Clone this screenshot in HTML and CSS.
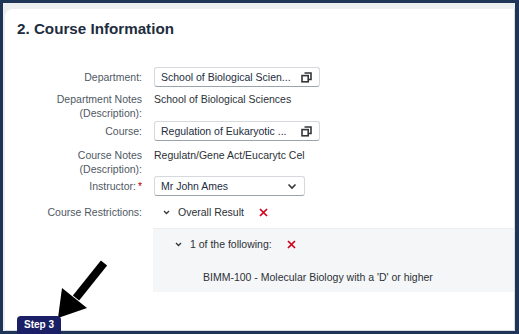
FILE: index.html
```html
<!doctype html>
<html lang="en">
<head>
    <meta charset="UTF-8">
    <title>Course Information</title>
    <link rel="stylesheet" href="styles.css">
</head>
<body>
<div class="frame">
    <div class="card">
        <h2 class="title">2. Course Information</h2>
        <div class="form">
            <div class="row row-input">
                <label class="lbl">Department:</label>
                <div class="field">
                    <span class="field-text">School of Biological Scien...</span>
                    <svg class="icon" width="11" height="11" viewBox="0 0 11 11">
                        <path d="M3.5 1h6.5v6.5h-2.2" fill="none" stroke="#32363a" stroke-width="1.6"/>
                        <rect x="1" y="3.6" width="6.2" height="6.2" fill="none" stroke="#32363a" stroke-width="1.6"/>
                    </svg>
                </div>
            </div>
            <div class="row row-text">
                <label class="lbl">Department Notes<br>(Description):</label>
                <div class="val">School of Biological Sciences</div>
            </div>
            <div class="row row-input">
                <label class="lbl">Course:</label>
                <div class="field">
                    <span class="field-text">Regulation of Eukaryotic ...</span>
                    <svg class="icon" width="11" height="11" viewBox="0 0 11 11">
                        <path d="M3.5 1h6.5v6.5h-2.2" fill="none" stroke="#32363a" stroke-width="1.6"/>
                        <rect x="1" y="3.6" width="6.2" height="6.2" fill="none" stroke="#32363a" stroke-width="1.6"/>
                    </svg>
                </div>
            </div>
            <div class="row row-text">
                <label class="lbl">Course Notes<br>(Description):</label>
                <div class="val">Regulatn/Gene Act/Eucarytc Cel</div>
            </div>
            <div class="row row-input row-last">
                <label class="lbl">Instructor:<span class="req">*</span></label>
                <div class="field field-select">
                    <span class="field-text">Mr John Ames</span>
                    <svg class="icon" width="10" height="7" viewBox="0 0 10 7">
                        <path d="M1.5 1.5l3.5 3.5l3.5-3.5" fill="none" stroke="#32363a" stroke-width="1.6"/>
                    </svg>
                </div>
            </div>
            <div class="row row-restr">
                <label class="lbl">Course Restrictions:</label>
                <div class="node">
                    <svg class="chev" width="7" height="5" viewBox="0 0 7 5">
                        <path d="M1 1l2.5 2.5l2.5-2.5" fill="none" stroke="#32363a" stroke-width="1.3"/>
                    </svg>
                    <span>Overall Result</span>
                    <svg class="del" width="9" height="9" viewBox="0 0 9 9">
                        <path d="M1 1l7 7M8 1l-7 7" stroke="#d0021b" stroke-width="1.7"/>
                    </svg>
                </div>
            </div>
        </div>
        <div class="panel">
            <div class="node">
                <svg class="chev" width="7" height="5" viewBox="0 0 7 5">
                    <path d="M1 1l2.5 2.5l2.5-2.5" fill="none" stroke="#32363a" stroke-width="1.3"/>
                </svg>
                <span>1 of the following:</span>
                <svg class="del" width="9" height="9" viewBox="0 0 9 9">
                    <path d="M1 1l7 7M8 1l-7 7" stroke="#d0021b" stroke-width="1.7"/>
                </svg>
            </div>
            <div class="leaf">BIMM-100 - Molecular Biology with a 'D' or higher</div>
        </div>
    </div>
    <svg class="arrow" width="60" height="64" viewBox="0 0 60 64">
        <line x1="48" y1="5" x2="20" y2="40" stroke="#000" stroke-width="8"/>
        <polygon points="2,60 6,30 31,50" fill="#000"/>
    </svg>
    <span class="step">Step 3</span>
</div>
</body>
</html>
```

FILE: styles.css
```css
html, body {
    margin: 0;
    padding: 0;
}

body {
    width: 519px;
    height: 334px;
    overflow: hidden;
    font-family: "Liberation Sans", Arial, sans-serif;
}

.frame {
    position: relative;
    box-sizing: border-box;
    width: 519px;
    height: 334px;
    border: solid #1f3558;
    border-width: 3px 4px 3px 3px;
    background-color: #eceef0;
    padding: 6px 0 0 2px;
}

.card {
    height: 100%;
    background-color: #fff;
    border-radius: 8px 0 0 0;
    border-right: 1px solid #d9dcdf;
    border-bottom: 1px solid #d9dcdf;
    box-sizing: border-box;
    padding: 10px 0 0 0;
}

.title {
    margin: 0 0 0 12px;
    font-size: 15.2px;
    font-weight: 700;
    color: #1d2d3e;
    line-height: 20px;
}

.form {
    margin-top: 28px;
}

.row {
    display: grid;
    grid-template-columns: 137px 1fr;
    column-gap: 12px;
    align-items: center;
    font-size: 10.5px;
    color: #2c3137;
}

.lbl {
    text-align: right;
    color: #4f5964;
    line-height: 14px;
}

.req {
    color: #bb0000;
    margin-left: 2px;
}

.row-input {
    height: 20px;
}

.row-text {
    align-items: start;
    margin: 5px 0 1px;
}

.row-input + .row-text {
    margin-top: 5px;
}

.row-text + .row-input + .row-text {
    margin-top: 7px;
}

.val {
    line-height: 14px;
}

.field {
    display: flex;
    align-items: center;
    justify-content: space-between;
    box-sizing: border-box;
    width: 166px;
    height: 20px;
    padding: 0 7px 0 6px;
    border: 1px solid #d5d9dd;
    border-bottom-color: #9aa4ad;
    border-radius: 3px;
    background-color: #fff;
}

.row-last {
    margin-top: -1px;
}

.field-select {
    width: 151px;
}

.field-text {
    color: #1d2d3e;
}

.row-restr {
    margin-top: 9px;
    height: 14px;
}

.node {
    display: flex;
    align-items: center;
    gap: 8px;
    color: #2c3137;
    padding-left: 9px;
    height: 14px;
}

.del {
    margin-left: 7px;
}

.panel {
    margin: 9px 0 0 148px;
    height: 64px;
    background-color: #f5f6f7;
    border-top: 1px solid #eceef0;
    font-size: 10.5px;
    box-sizing: border-box;
    padding-top: 8px;
}

.panel .node {
    padding-left: 22px;
}

.leaf {
    margin: 19px 0 0 50px;
    color: #2c3137;
    line-height: 14px;
}

.arrow {
    position: absolute;
    left: 53px;
    top: 255px;
}

.step {
    position: absolute;
    left: 14px;
    bottom: -3px;
    padding: 3px 7px 4px;
    background-color: #1a1f66;
    color: #fff;
    font-size: 10px;
    font-weight: 700;
    border-radius: 4px 4px 0 0;
    line-height: 11px;
}
```
